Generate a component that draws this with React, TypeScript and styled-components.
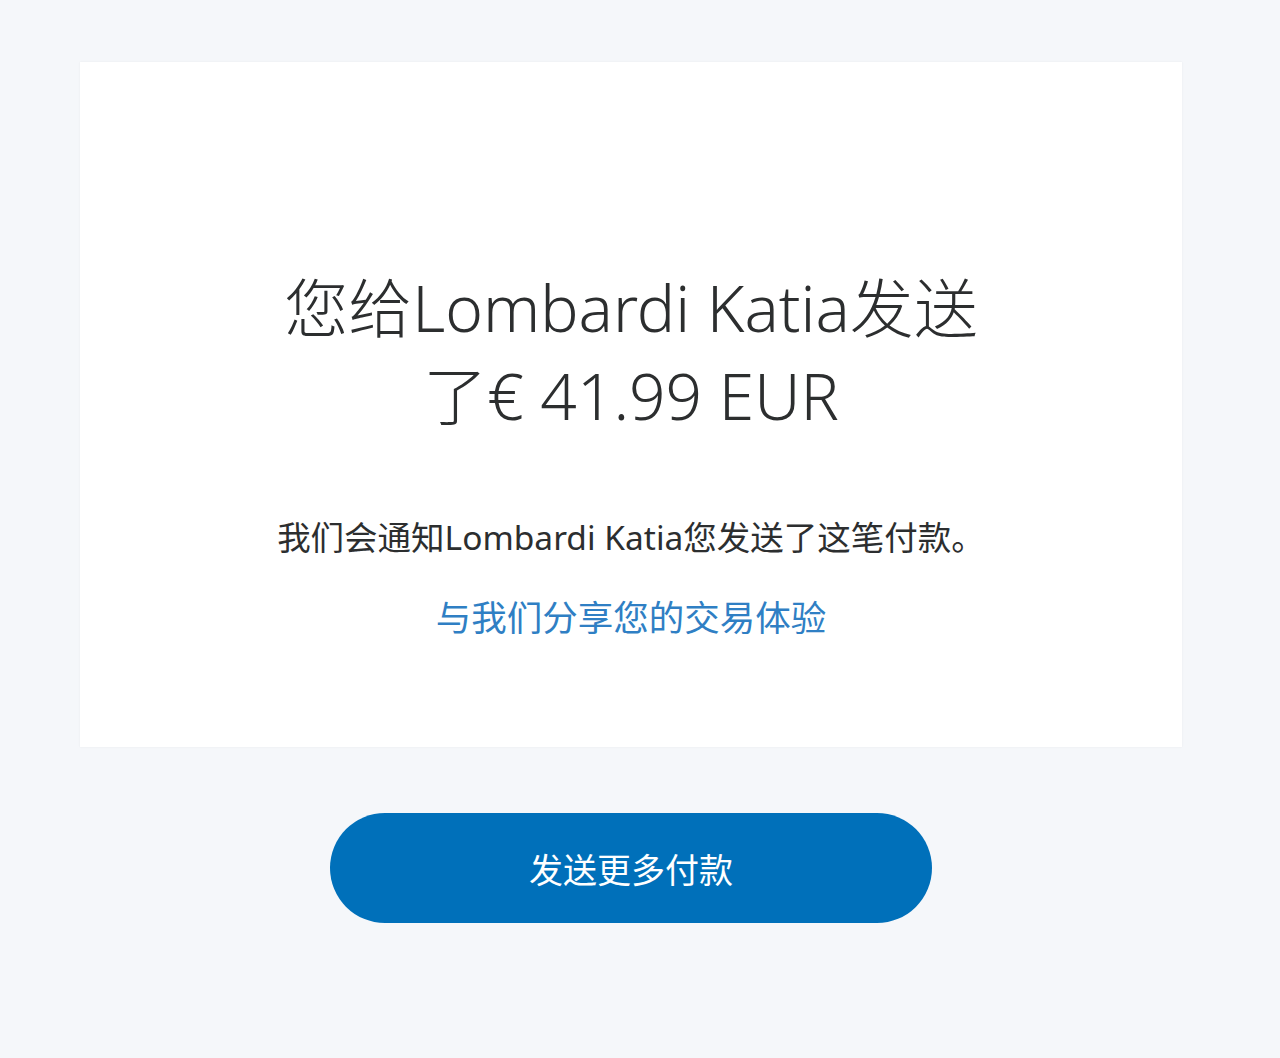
import React from 'react'
import styled, { createGlobalStyle } from 'styled-components'

const GlobalStyle = createGlobalStyle`
    html, body {
        margin: 0;
        padding: 0;
        background: #f5f7fa;
    }
    body {
        font-family: "Noto Sans", "Noto Sans CJK SC", sans-serif;
        color: #2c2e2f;
    }
`

const App = () => {
    return (
        <>
            <GlobalStyle />
            <Page>
                <Card>
                    <Heading>您给Lombardi Katia发送了€ 41.99 EUR</Heading>
                    <Note>我们会通知Lombardi Katia您发送了这笔付款。</Note>
                    <FeedbackLink href="#">与我们分享您的交易体验</FeedbackLink>
                </Card>
                <Actions>
                    <PrimaryButton type="button">发送更多付款</PrimaryButton>
                </Actions>
            </Page>
        </>
    )
}

const Page = styled.div`
    width: 1102px;
    padding: 62px 0 135px 80px;
`
const Card = styled.section`
    background: #ffffff;
    box-shadow: 0 0 2px rgba(0, 0, 0, 0.06);
    padding: 202px 40px 106px;
    display: flex;
    flex-direction: column;
    align-items: center;
    text-align: center;
`
const Heading = styled.h1`
    max-width: 720px;
    margin: 0;
    font-size: 64px;
    line-height: 88px;
    font-weight: 300;
    color: #2c2e2f;
`
const Note = styled.p`
    margin: 73px 0 0;
    font-size: 33.5px;
    line-height: 48px;
    font-weight: 400;
    color: #2c2e2f;
`
const FeedbackLink = styled.a`
    margin-top: 32px;
    font-size: 35.5px;
    line-height: 48px;
    color: #2f7fc4;
    text-decoration: none;
`
const Actions = styled.div`
    display: flex;
    justify-content: center;
    margin-top: 66px;
`
const PrimaryButton = styled.button`
    width: 602px;
    height: 110px;
    border: none;
    border-radius: 55px;
    background: #0070ba;
    color: #ffffff;
    font-family: "Noto Sans", "Noto Sans CJK SC", sans-serif;
    font-size: 34px;
    cursor: pointer;
`

export default App
